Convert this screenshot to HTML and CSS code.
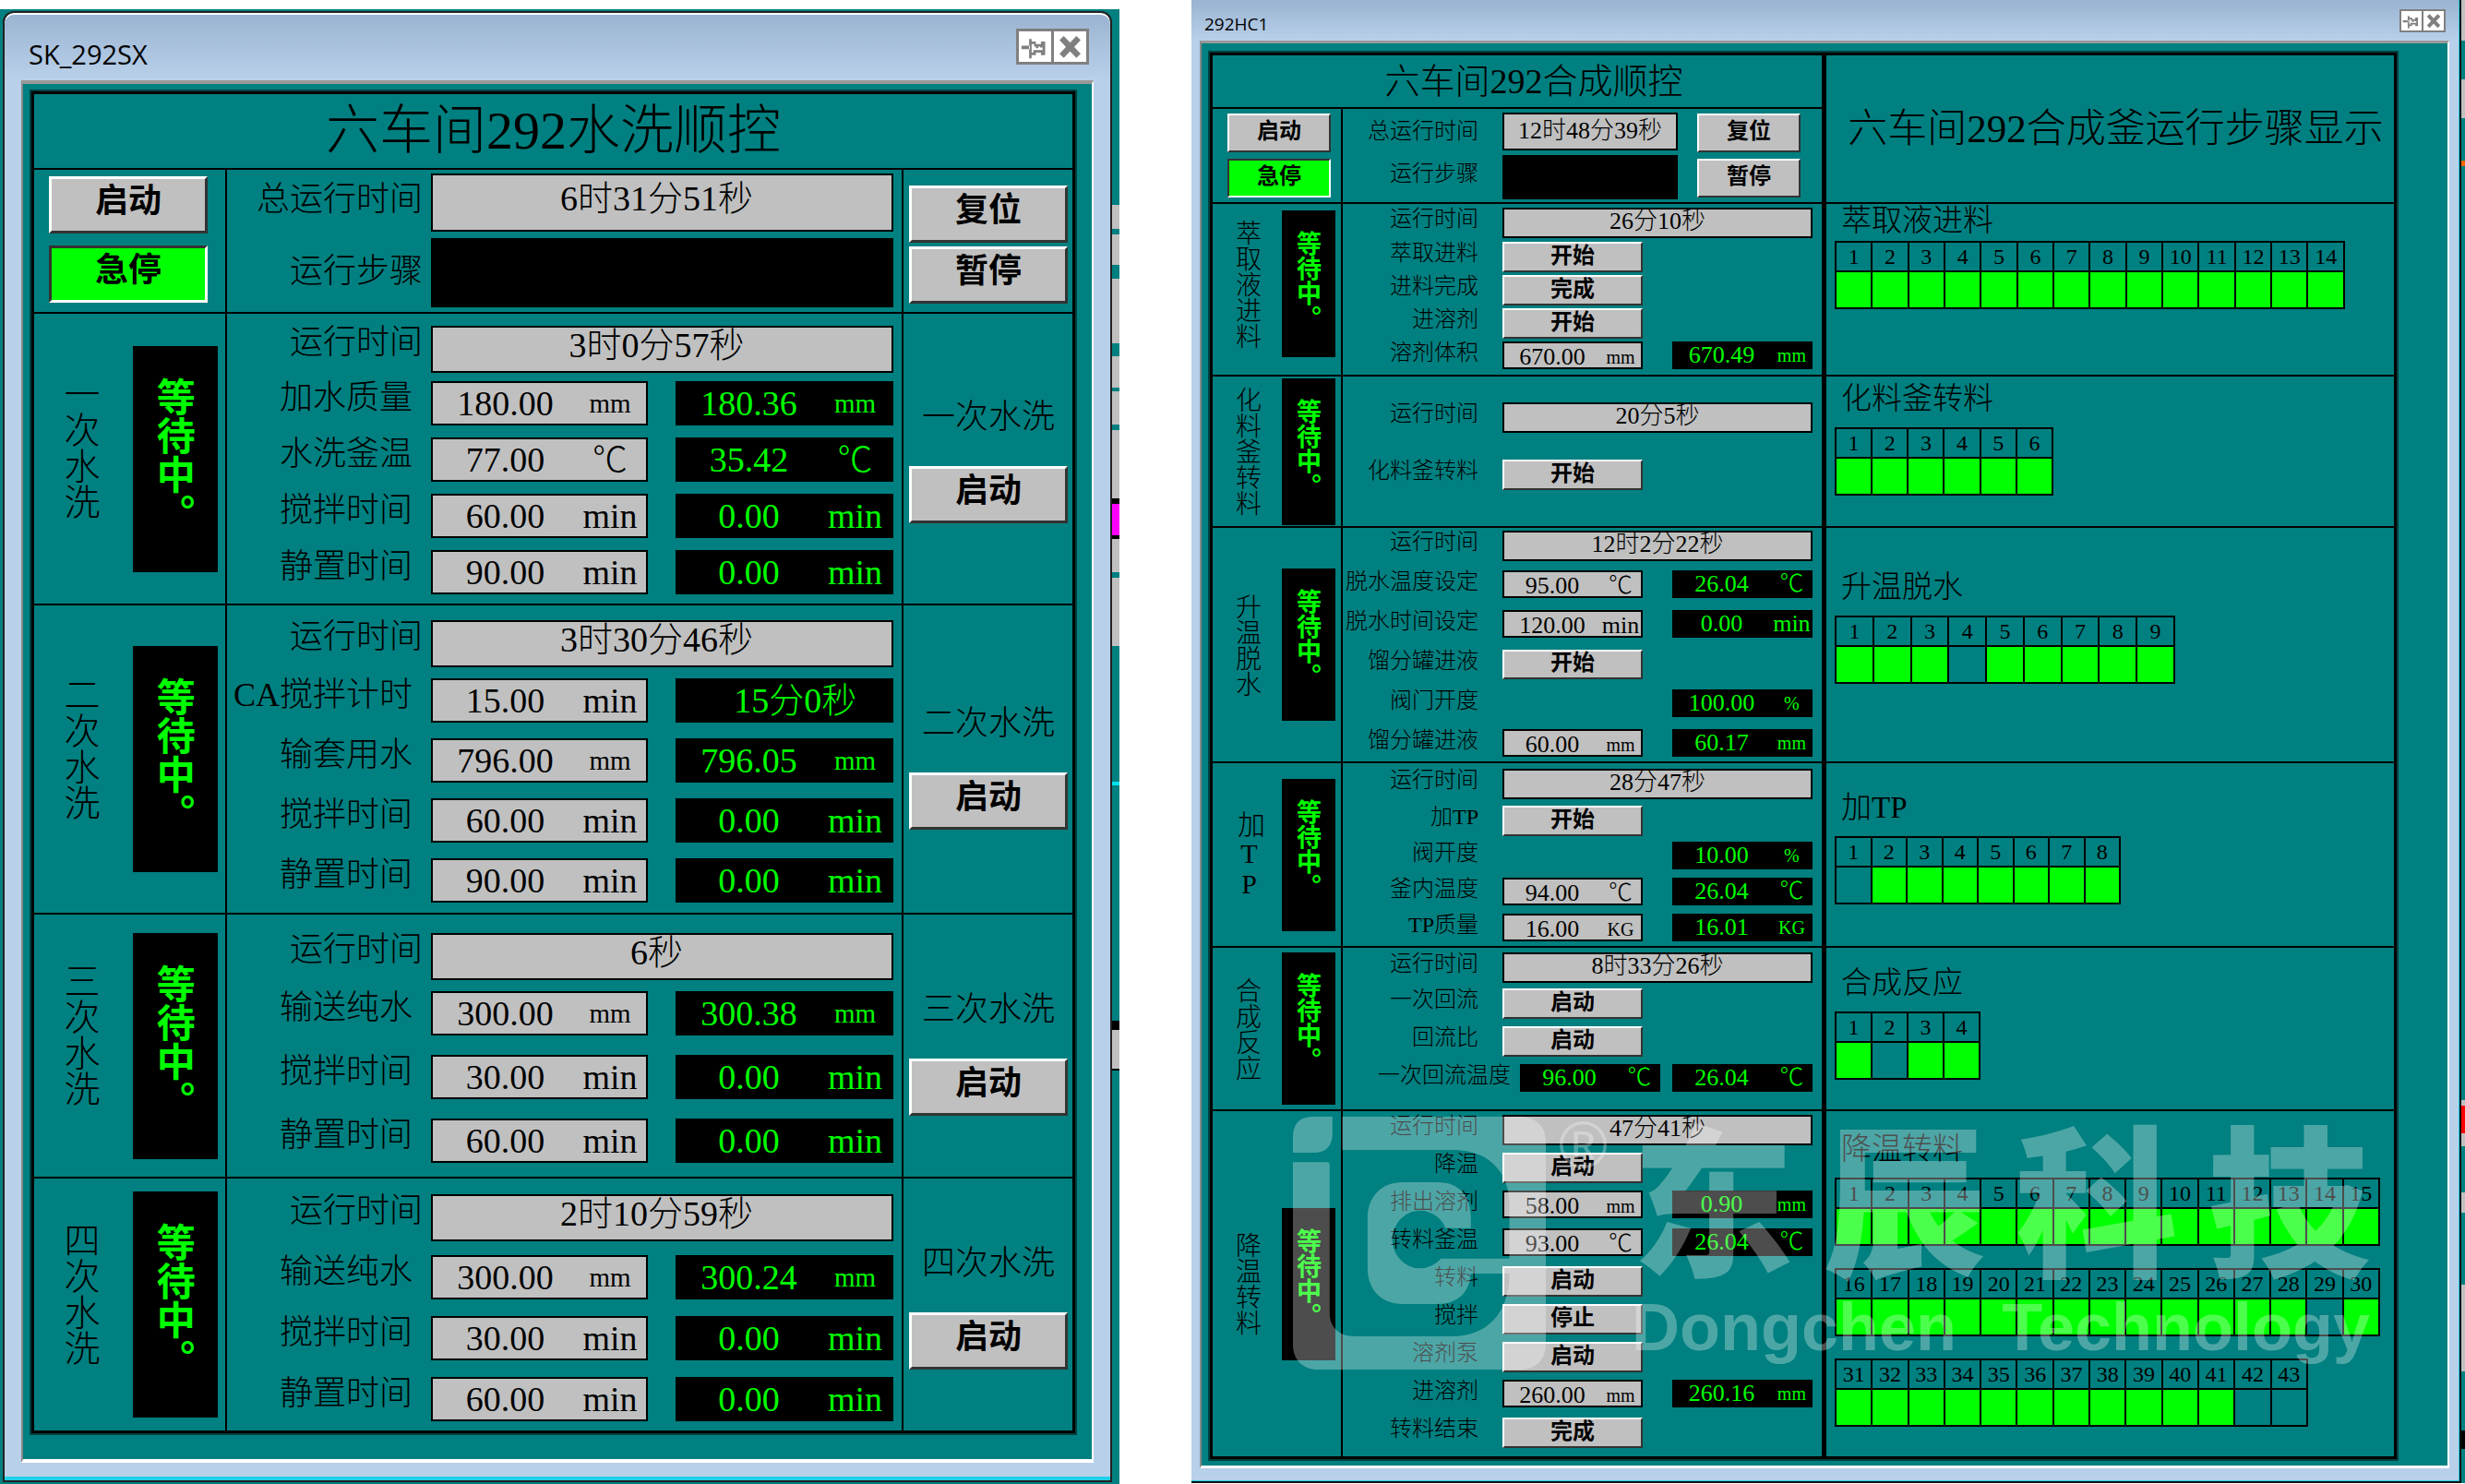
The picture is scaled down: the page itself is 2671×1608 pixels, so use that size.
FILE: index.html
```html
<!DOCTYPE html>
<html lang="zh-CN">
<head>
<meta charset="utf-8">
<title>六车间292顺控</title>
<link rel="stylesheet" href="styles.css">
</head>
<body>
<main class="desktop">

<div class="desk desk-wash">
<section class="window wash" aria-label="SK_292SX">
  <header class="titlebar">
    <span class="caption">SK_292SX</span>
    <div class="tools">
      <button type="button" aria-label="固定"><svg viewBox="0 0 36 36"><path d="M2 17H12V21H2ZM11 9H14V12H19V15H25V12H30V28H25V25H19V28H14V32H11ZM14 15V25H16V22H27V19H24V18H22V20H19V18H17V15Z" fill="#808080" fill-rule="evenodd"/></svg></button>
      <button type="button" aria-label="关闭"><svg viewBox="0 0 36 36"><path d="M8 8L28 29M28 8L8 29" stroke="#808080" stroke-width="7"/></svg></button>
    </div>
  </header>
  <div class="client">
    <div class="frame">
      <h1 class="title">六车间292水洗顺控</h1>

      <div class="section controls">
        <div class="side"><button type="button" class="btn">启动</button><button type="button" class="btn stop">急停</button></div>
        <div class="rows">
          <div class="row total"><span class="label">总运行时间</span><output class="time">6时31分51秒</output></div>
          <div class="row step"><span class="label">运行步骤</span><output class="readout span"></output></div>
        </div>
        <div class="action"><button type="button" class="btn">复位</button><button type="button" class="btn">暂停</button></div>
      </div>

      <div class="section wash-1">
        <div class="side"><h2 class="vertical">一次水洗</h2><output class="wait">等待中。</output></div>
        <div class="rows">
          <div class="row run"><span class="label">运行时间</span><output class="time">3时0分57秒</output></div>
          <div class="row"><label class="label" for="w11">加水质量</label><span class="field"><input id="w11" value="180.00"><span class="unit mm">mm</span></span><output class="readout"><span>180.36</span><span class="unit mm">mm</span></output></div>
          <div class="row"><label class="label" for="w12">水洗釜温</label><span class="field"><input id="w12" value="77.00"><span class="unit">℃</span></span><output class="readout"><span>35.42</span><span class="unit">℃</span></output></div>
          <div class="row"><label class="label" for="w13">搅拌时间</label><span class="field"><input id="w13" value="60.00"><span class="unit">min</span></span><output class="readout"><span>0.00</span><span class="unit">min</span></output></div>
          <div class="row"><label class="label" for="w14">静置时间</label><span class="field"><input id="w14" value="90.00"><span class="unit">min</span></span><output class="readout"><span>0.00</span><span class="unit">min</span></output></div>
        </div>
        <div class="action"><span class="label">一次水洗</span><button type="button" class="btn">启动</button></div>
      </div>

      <div class="section wash-2">
        <div class="side"><h2 class="vertical">二次水洗</h2><output class="wait">等待中。</output></div>
        <div class="rows">
          <div class="row run"><span class="label">运行时间</span><output class="time">3时30分46秒</output></div>
          <div class="row"><label class="label" for="w21">CA搅拌计时</label><span class="field"><input id="w21" value="15.00"><span class="unit">min</span></span><output class="readout timer">15分0秒</output></div>
          <div class="row"><label class="label" for="w22">输套用水</label><span class="field"><input id="w22" value="796.00"><span class="unit mm">mm</span></span><output class="readout"><span>796.05</span><span class="unit mm">mm</span></output></div>
          <div class="row"><label class="label" for="w23">搅拌时间</label><span class="field"><input id="w23" value="60.00"><span class="unit">min</span></span><output class="readout"><span>0.00</span><span class="unit">min</span></output></div>
          <div class="row"><label class="label" for="w24">静置时间</label><span class="field"><input id="w24" value="90.00"><span class="unit">min</span></span><output class="readout"><span>0.00</span><span class="unit">min</span></output></div>
        </div>
        <div class="action"><span class="label">二次水洗</span><button type="button" class="btn">启动</button></div>
      </div>

      <div class="section wash-3">
        <div class="side"><h2 class="vertical">三次水洗</h2><output class="wait">等待中。</output></div>
        <div class="rows">
          <div class="row run"><span class="label">运行时间</span><output class="time">6秒</output></div>
          <div class="row"><label class="label" for="w31">输送纯水</label><span class="field"><input id="w31" value="300.00"><span class="unit mm">mm</span></span><output class="readout"><span>300.38</span><span class="unit mm">mm</span></output></div>
          <div class="row"><label class="label" for="w32">搅拌时间</label><span class="field"><input id="w32" value="30.00"><span class="unit">min</span></span><output class="readout"><span>0.00</span><span class="unit">min</span></output></div>
          <div class="row"><label class="label" for="w33">静置时间</label><span class="field"><input id="w33" value="60.00"><span class="unit">min</span></span><output class="readout"><span>0.00</span><span class="unit">min</span></output></div>
        </div>
        <div class="action"><span class="label">三次水洗</span><button type="button" class="btn">启动</button></div>
      </div>

      <div class="section wash-4">
        <div class="side"><h2 class="vertical">四次水洗</h2><output class="wait">等待中。</output></div>
        <div class="rows">
          <div class="row run"><span class="label">运行时间</span><output class="time">2时10分59秒</output></div>
          <div class="row"><label class="label" for="w41">输送纯水</label><span class="field"><input id="w41" value="300.00"><span class="unit mm">mm</span></span><output class="readout"><span>300.24</span><span class="unit mm">mm</span></output></div>
          <div class="row"><label class="label" for="w42">搅拌时间</label><span class="field"><input id="w42" value="30.00"><span class="unit">min</span></span><output class="readout"><span>0.00</span><span class="unit">min</span></output></div>
          <div class="row"><label class="label" for="w43">静置时间</label><span class="field"><input id="w43" value="60.00"><span class="unit">min</span></span><output class="readout"><span>0.00</span><span class="unit">min</span></output></div>
        </div>
        <div class="action"><span class="label">四次水洗</span><button type="button" class="btn">启动</button></div>
      </div>
    </div>
  </div>
</section>
<div class="strip"></div>
</div>

<div class="desk desk-synth">
<section class="window synth" aria-label="292HC1">
  <header class="titlebar">
    <span class="caption">292HC1</span>
    <div class="tools">
      <button type="button" aria-label="固定"><svg viewBox="0 0 36 36"><path d="M2 17H12V21H2ZM11 9H14V12H19V15H25V12H30V28H25V25H19V28H14V32H11ZM14 15V25H16V22H27V19H24V18H22V20H19V18H17V15Z" fill="#808080" fill-rule="evenodd"/></svg></button>
      <button type="button" aria-label="关闭"><svg viewBox="0 0 36 36"><path d="M8 8L28 29M28 8L8 29" stroke="#808080" stroke-width="7"/></svg></button>
    </div>
  </header>
  <div class="client">
    <div class="frame">
      <div class="head">
        <div class="head-main">
          <h1 class="title">六车间292合成顺控</h1>
          <div class="controls">
            <div class="side"><button type="button" class="btn">启动</button><button type="button" class="btn stop">急停</button></div>
            <div class="rows">
              <div class="row total"><span class="label">总运行时间</span><output class="time">12时48分39秒</output></div>
              <div class="row step"><span class="label">运行步骤</span><output class="readout span"></output></div>
            </div>
            <div class="action"><button type="button" class="btn">复位</button><button type="button" class="btn">暂停</button></div>
          </div>
        </div>
        <h1 class="title steps-title">六车间292合成釜运行步骤显示</h1>
      </div>

      <div class="section feed">
        <div class="side"><h2 class="vertical">萃取液进料</h2><output class="wait">等待中。</output></div>
        <div class="rows">
          <div class="row run"><span class="label">运行时间</span><output class="time">26分10秒</output></div>
          <div class="row"><span class="label">萃取进料</span><button type="button" class="btn">开始</button></div>
          <div class="row"><span class="label">进料完成</span><button type="button" class="btn">完成</button></div>
          <div class="row"><span class="label">进溶剂</span><button type="button" class="btn">开始</button></div>
          <div class="row"><label class="label" for="s11">溶剂体积</label><span class="field"><input id="s11" value="670.00"><span class="unit mm">mm</span></span><output class="readout"><span>670.49</span><span class="unit mm">mm</span></output></div>
        </div>
        <div class="steps"><h3>萃取液进料</h3>
          <table class="n14"><thead><tr><th>1</th><th>2</th><th>3</th><th>4</th><th>5</th><th>6</th><th>7</th><th>8</th><th>9</th><th>10</th><th>11</th><th>12</th><th>13</th><th>14</th></tr></thead><tbody><tr><td class="on"></td><td class="on"></td><td class="on"></td><td class="on"></td><td class="on"></td><td class="on"></td><td class="on"></td><td class="on"></td><td class="on"></td><td class="on"></td><td class="on"></td><td class="on"></td><td class="on"></td><td class="on"></td></tr></tbody></table>
        </div>
      </div>

      <div class="section transfer">
        <div class="side"><h2 class="vertical">化料釜转料</h2><output class="wait">等待中。</output></div>
        <div class="rows">
          <div class="row run"><span class="label">运行时间</span><output class="time">20分5秒</output></div>
          <div class="row"><span class="label">化料釜转料</span><button type="button" class="btn">开始</button></div>
        </div>
        <div class="steps"><h3>化料釜转料</h3>
          <table class="n6"><thead><tr><th>1</th><th>2</th><th>3</th><th>4</th><th>5</th><th>6</th></tr></thead><tbody><tr><td class="on"></td><td class="on"></td><td class="on"></td><td class="on"></td><td class="on"></td><td class="on"></td></tr></tbody></table>
        </div>
      </div>

      <div class="section dewater">
        <div class="side"><h2 class="vertical">升温脱水</h2><output class="wait">等待中。</output></div>
        <div class="rows">
          <div class="row run"><span class="label">运行时间</span><output class="time">12时2分22秒</output></div>
          <div class="row"><label class="label" for="s31">脱水温度设定</label><span class="field"><input id="s31" value="95.00"><span class="unit">℃</span></span><output class="readout"><span>26.04</span><span class="unit">℃</span></output></div>
          <div class="row"><label class="label" for="s32">脱水时间设定</label><span class="field"><input id="s32" value="120.00"><span class="unit">min</span></span><output class="readout"><span>0.00</span><span class="unit">min</span></output></div>
          <div class="row"><span class="label">馏分罐进液</span><button type="button" class="btn">开始</button></div>
          <div class="row"><span class="label">阀门开度</span><output class="readout"><span>100.00</span><span class="unit percent">%</span></output></div>
          <div class="row"><label class="label" for="s33">馏分罐进液</label><span class="field"><input id="s33" value="60.00"><span class="unit mm">mm</span></span><output class="readout"><span>60.17</span><span class="unit mm">mm</span></output></div>
        </div>
        <div class="steps"><h3>升温脱水</h3>
          <table class="n9"><thead><tr><th>1</th><th>2</th><th>3</th><th>4</th><th>5</th><th>6</th><th>7</th><th>8</th><th>9</th></tr></thead><tbody><tr><td class="on"></td><td class="on"></td><td class="on"></td><td></td><td class="on"></td><td class="on"></td><td class="on"></td><td class="on"></td><td class="on"></td></tr></tbody></table>
        </div>
      </div>

      <div class="section add-tp">
        <div class="side"><h2 class="vertical">加TP</h2><output class="wait">等待中。</output></div>
        <div class="rows">
          <div class="row run"><span class="label">运行时间</span><output class="time">28分47秒</output></div>
          <div class="row"><span class="label">加TP</span><button type="button" class="btn">开始</button></div>
          <div class="row"><span class="label">阀开度</span><output class="readout"><span>10.00</span><span class="unit percent">%</span></output></div>
          <div class="row"><label class="label" for="s41">釜内温度</label><span class="field"><input id="s41" value="94.00"><span class="unit">℃</span></span><output class="readout"><span>26.04</span><span class="unit">℃</span></output></div>
          <div class="row"><label class="label" for="s42">TP质量</label><span class="field"><input id="s42" value="16.00"><span class="unit mm">KG</span></span><output class="readout"><span>16.01</span><span class="unit mm">KG</span></output></div>
        </div>
        <div class="steps"><h3>加TP</h3>
          <table class="n8"><thead><tr><th>1</th><th>2</th><th>3</th><th>4</th><th>5</th><th>6</th><th>7</th><th>8</th></tr></thead><tbody><tr><td></td><td class="on"></td><td class="on"></td><td class="on"></td><td class="on"></td><td class="on"></td><td class="on"></td><td class="on"></td></tr></tbody></table>
        </div>
      </div>

      <div class="section react">
        <div class="side"><h2 class="vertical">合成反应</h2><output class="wait">等待中。</output></div>
        <div class="rows">
          <div class="row run"><span class="label">运行时间</span><output class="time">8时33分26秒</output></div>
          <div class="row"><span class="label">一次回流</span><button type="button" class="btn">启动</button></div>
          <div class="row"><span class="label">回流比</span><button type="button" class="btn">启动</button></div>
          <div class="row wide"><span class="label">一次回流温度</span><output class="readout set"><span>96.00</span><span class="unit">℃</span></output><output class="readout"><span>26.04</span><span class="unit">℃</span></output></div>
        </div>
        <div class="steps"><h3>合成反应</h3>
          <table class="n4"><thead><tr><th>1</th><th>2</th><th>3</th><th>4</th></tr></thead><tbody><tr><td class="on"></td><td></td><td class="on"></td><td class="on"></td></tr></tbody></table>
        </div>
      </div>

      <div class="section cool">
        <div class="side"><h2 class="vertical">降温转料</h2><output class="wait">等待中。</output></div>
        <div class="rows">
          <div class="row run"><span class="label">运行时间</span><output class="time">47分41秒</output></div>
          <div class="row"><span class="label">降温</span><button type="button" class="btn">启动</button></div>
          <div class="row"><label class="label" for="s61">排出溶剂</label><span class="field"><input id="s61" value="58.00"><span class="unit mm">mm</span></span><output class="readout"><span>0.90</span><span class="unit mm">mm</span></output></div>
          <div class="row"><label class="label" for="s62">转料釜温</label><span class="field"><input id="s62" value="93.00"><span class="unit">℃</span></span><output class="readout"><span>26.04</span><span class="unit">℃</span></output></div>
          <div class="row"><span class="label">转料</span><button type="button" class="btn">启动</button></div>
          <div class="row"><span class="label">搅拌</span><button type="button" class="btn">停止</button></div>
          <div class="row"><span class="label">溶剂泵</span><button type="button" class="btn">启动</button></div>
          <div class="row"><label class="label" for="s63">进溶剂</label><span class="field"><input id="s63" value="260.00"><span class="unit mm">mm</span></span><output class="readout"><span>260.16</span><span class="unit mm">mm</span></output></div>
          <div class="row"><span class="label">转料结束</span><button type="button" class="btn">完成</button></div>
        </div>
        <div class="steps"><h3>降温转料</h3>
          <table class="n15"><thead><tr><th>1</th><th>2</th><th>3</th><th>4</th><th>5</th><th>6</th><th>7</th><th>8</th><th>9</th><th>10</th><th>11</th><th>12</th><th>13</th><th>14</th><th>15</th></tr></thead><tbody><tr><td class="on"></td><td class="on"></td><td class="on"></td><td class="on"></td><td class="on"></td><td class="on"></td><td class="on"></td><td class="on"></td><td class="on"></td><td class="on"></td><td class="on"></td><td class="on"></td><td class="on"></td><td class="on"></td><td class="on"></td></tr></tbody></table>
          <table class="n15"><thead><tr><th>16</th><th>17</th><th>18</th><th>19</th><th>20</th><th>21</th><th>22</th><th>23</th><th>24</th><th>25</th><th>26</th><th>27</th><th>28</th><th>29</th><th>30</th></tr></thead><tbody><tr><td class="on"></td><td class="on"></td><td class="on"></td><td class="on"></td><td class="on"></td><td class="on"></td><td class="on"></td><td class="on"></td><td class="on"></td><td class="on"></td><td class="on"></td><td class="on"></td><td class="on"></td><td></td><td class="on"></td></tr></tbody></table>
          <table class="n13"><thead><tr><th>31</th><th>32</th><th>33</th><th>34</th><th>35</th><th>36</th><th>37</th><th>38</th><th>39</th><th>40</th><th>41</th><th>42</th><th>43</th></tr></thead><tbody><tr><td class="on"></td><td class="on"></td><td class="on"></td><td class="on"></td><td class="on"></td><td class="on"></td><td class="on"></td><td class="on"></td><td class="on"></td><td class="on"></td><td class="on"></td><td></td><td></td></tr></tbody></table>
        </div>

        <div class="watermark">
          <svg class="mark" viewBox="33 30 820 822" preserveAspectRatio="none"><path fill="#fff" d="M161 30V85C161 125 140 147 105 147H33V95C33 55 55 30 95 30ZM33 178H143Q152 178 152 187V670C152 715 185 744 230 744H550C660 744 735 670 735 540H610C605 600 570 639 500 639H390C320 639 275 595 275 520V360C275 290 320 243 390 243H500C575 243 610 290 610 360V392H528A90 94 0 1 0 513 491H735V320C735 210 670 138 550 138H193V30H770C820 30 853 62 853 110V770C853 820 820 852 770 852H115C65 852 33 820 33 770Z"/></svg>
          <span class="reg">®</span>
          <div class="brand">
            <div class="brand-cn"><span>东</span><span>辰</span><span>科</span><span>技</span></div>
            <div class="brand-en"><span>Dongchen</span><span>Technology</span></div>
          </div>
        </div>
      </div>
    </div>
  </div>
</section>
<div class="strip"></div>
</div>

</main>
</body>
</html>
```
FILE: styles.css
```css
* { box-sizing: border-box; }

body {
  margin: 0;
  background: #fff;
  color: #000;
  font-family: "Liberation Serif", "Noto Sans CJK SC", serif;
  font-weight: 300;
}

h1, h2, h3 { margin: 0; font-weight: 300; }

button, input {
  margin: 0;
  font-family: inherit;
  color: inherit;
}

.desktop {
  display: grid;
  grid-template-columns: 1213fr 1380fr;
  column-gap: 78px;
  align-items: start;
}

.desk { display: grid; background: #008080; }
.desk-wash { grid-template-columns: 1fr 8px; margin-top: 10px; padding: 2px 0 4px 3px; }
.desk-synth { grid-template-columns: 1fr 4px; }

/* slivers of the screen behind the windows */
.desk-wash .strip {
  background: linear-gradient(
    #008080 210px, #c0c0c0 210px 236px, #008080 236px 242px, #c0c0c0 242px 275px, #008080 275px 290px,
    #c0c0c0 290px 360px, #008080 360px 374px, #c0c0c0 374px 408px, #008080 408px 412px, #c0c0c0 412px 448px,
    #008080 448px 454px, #c0c0c0 454px 528px, #000 528px 534px, #f0f 534px 568px, #000 568px 572px,
    #c0c0c0 572px 608px, #008080 608px 614px, #c0c0c0 614px 688px, #008080 688px 835px, #00e0f0 835px 839px,
    #008080 839px 1094px, #000 1094px 1104px, #c0c0c0 1104px 1146px, #000 1146px 1148px, #008080 1148px);
}
.desk-synth .strip {
  background: linear-gradient(
    #c0c0c0 44px, #008080 44px 86px, #c0c0c0 86px 128px, #008080 128px 174px, #f60 174px 180px,
    #008080 180px 1192px, #c0c0c0 1192px 1198px, #f00 1198px 1228px, #c0c0c0 1228px 1242px, #008080 1242px 1292px,
    #c0c0c0 1292px 1314px, #008080 1314px 1392px, #c0c0c0 1392px 1486px, #008080 1486px 1550px, #000 1550px 1570px, #008080 1570px);
}

.window {
  display: flex;
  flex-direction: column;
  background: #b9d0ea;
}
.wash {
  border: 2px solid #222;
  border-radius: 12px 12px 0 0;
  padding: 0 18px 19px;
  box-shadow: inset 0 -4px #1fd0e8, inset 0 2px #fff;
  background: linear-gradient(#99b3d0, #b9d0ea 72px);
}
.synth {
  border: solid #111;
  border-width: 0 2px 2px 0;
  padding: 0 11px 14px 9px;
  box-shadow: inset -1px -1px #1fd0e8;
  background: linear-gradient(#99b3d0, #b9d0ea 44px);
}

.titlebar { display: flex; justify-content: space-between; align-items: center; font-family: "Open Sans", sans-serif; font-weight: 400; }
.wash .titlebar { height: 73px; padding: 0 5px 0 8px; font-size: 29px; }
.wash .caption { padding-top: 16px; }
.synth .titlebar { height: 44px; padding: 0 4px 0 5px; font-size: 19px; }
.synth .caption { padding-top: 8px; }

.tools { display: flex; border: 3px solid #808080; background: #808080; gap: 3px; }
.tools button { display: grid; width: 35px; height: 33px; padding: 0; border: 0; background: #fff; }
.tools svg { width: 100%; height: 100%; }
.synth .tools { border-width: 2px; gap: 2px; }
.synth .tools button { width: 22px; height: 21px; }

.client {
  background: #008080;
  border: solid;
  border-color: #999 #fff #fff #888;
}
.wash .client { border-width: 4px 2px; padding: 8px 18px 28px 9px; }
.synth .client { border-width: 3px 2px; padding: 10px 55px 7px 9px; }

.frame {
  border: 3px solid #000;
  outline: 2px solid #004040;
}

.title { text-align: center; }
.section { position: relative; display: grid; border-top: 2px solid #000; }
.side { display: flex; justify-content: space-between; align-items: center; border-right: 2px solid #000; }
.rows { display: flex; flex-direction: column; gap: var(--gap); padding-top: var(--top); padding-bottom: var(--bottom); }
.rows .run { margin-bottom: var(--lead); }
.row { display: grid; }
.row .label { grid-column: 1; justify-self: end; white-space: nowrap; }
.row .field, .row .btn, .row .set { grid-column: 2; }
.row .readout { grid-column: 4; }
.row .readout.set { grid-column: 2; }
.row .time, .row .span { grid-column: 2 / -1; }

.vertical, .wait {
  writing-mode: vertical-rl;
  text-orientation: upright;
  font-family: "Noto Sans CJK SC", sans-serif;
}
.wait {
  background: #000;
  color: #0f0;
  font-weight: 700;
}

.time { background: #c0c0c0; border: 2px solid #000; text-align: center; }
.field, .readout { display: grid; align-items: center; text-align: center; }
.field { background: #c0c0c0; border: 2px solid #000; }
.field input { width: 100%; padding: 0; border: 0; background: none; text-align: center; font-size: inherit; font-weight: inherit; }
.readout { background: #000; color: #0f0; }

.btn {
  border: solid;
  border-color: #fff #333 #333 #fff;
  background: #c0c0c0;
  font-weight: 700;
}
.btn.stop { background: #0f0; border-color: #333 #fff #fff #333; }

/* washing window */
.wash .title { height: 80px; font-size: 58px; line-height: 80px; }
.wash .section { grid-template-columns: 209fr 730fr 185fr; font-size: 36px; }
.wash .side { padding: 0 8px 0 32px; }
.wash .vertical { font-size: 39px; line-height: 40px; padding-bottom: 24px; }
.wash .wait { height: 245px; width: 92px; padding-top: 34px; font-size: 42px; line-height: 92px; }
.wash .rows { padding-right: 9px; }
.wash .row { grid-template-columns: 221fr 235fr 30fr 236fr; height: 46px; }
.wash .row .label { padding-right: 20px; line-height: 36px; }
.wash .run { height: 51px; }
.wash .run .label, .wash .controls .label { padding-right: 9px; }
.wash .time, .wash .field, .wash .readout { font-size: 38px; }
.wash .time { line-height: 38px; padding-right: 12px; }
.wash .field, .wash .readout { grid-template-columns: 162fr 72fr; line-height: 42px; }
.wash .field { padding-right: 4px; }
.wash .readout { padding-right: 6px; }
.wash .timer { grid-template-columns: 1fr; padding-left: 30px; }
.wash .mm { font-size: 29px; }
.wash .btn { height: 62px; border-width: 3px; padding: 0 0 8px; font-size: 36px; line-height: 44px; }
.wash .action { display: flex; flex-direction: column; justify-content: center; gap: 36px; border-left: 2px solid #000; padding: 8px 5px 0 6px; }
.wash .action .label { text-align: center; line-height: 34px; }
.wash .controls .side { display: flex; flex-direction: column; align-items: stretch; justify-content: flex-start; gap: 13px; padding: 7px 19px 0 16px; }
.wash .controls .action { justify-content: flex-start; gap: 4px; padding-top: 17px; }
.wash .total { height: 63px; }
.wash .step { height: 75px; }
.wash .total .label { padding-top: 10px; }
.wash .step .label { padding-top: 18px; }
.wash .total .time { line-height: 50px; }

.wash .controls { --top: 4px; --gap: 7px; --lead: 0; --bottom: 5px; }
.wash-1 { --top: 13px; --gap: 15px; --lead: -6px; --bottom: 12px; }
.wash-2 { --top: 16px; --gap: 19px; --lead: -7px; --bottom: 13px; }
.wash-3 { --top: 20px; --gap: 23px; --lead: -11px; --bottom: 17px; }
.wash-4 { --top: 17px; --gap: 20px; --lead: -5px; --bottom: 12px; }
.wash .wash-2 .action, .wash .wash-3 .action { padding-top: 20px; }

/* synthesis window */
.synth .title { height: 56px; padding-left: 36px; font-size: 38px; line-height: 56px; }
.head { display: grid; grid-template-columns: 665fr 615fr; }
.head-main { border-right: 5px solid #000; }
.head-main .controls { display: grid; grid-template-columns: 141fr 363fr 156fr; border-top: 2px solid #000; font-size: 24px; }
.synth .steps-title { align-self: center; height: 60px; padding-left: 12px; font-size: 43px; line-height: 60px; }
.synth .section { grid-template-columns: 141fr 524fr 615fr; font-size: 24px; }
.synth .side { padding: 0 6px 0 24px; }
.synth .vertical { font-size: 28px; line-height: 30px; }
.synth .wait { height: 165px; width: 58px; padding-top: 22px; font-size: 27px; line-height: 58px; }
.feed .side { padding-bottom: 12px; }
.synth .feed .wait, .synth .transfer .wait { height: 159px; }
.synth .add-tp .vertical { font-family: inherit; font-size: 30px; }
.synth .row { grid-template-columns: 173fr 152fr 32fr 152fr; height: 33px; }
.synth .row .label { padding-right: 26px; line-height: 24px; }
.synth .section .rows { padding-right: 10px; border-right: 5px solid #000; }
.synth .row.wide { grid-template-columns: 192fr 152fr 13fr 152fr; }
.synth .wide .label { padding-right: 10px; }
.synth .time, .synth .field, .synth .readout { font-size: 26px; }
.synth .time { line-height: 26px; }
.synth .field, .synth .section .readout { grid-template-columns: 104fr 44fr; height: 30px; line-height: 26px; }
.synth .mm, .percent { font-size: 20px; }
.synth .btn { border-width: 2px; padding: 0 0 4px; font-size: 24px; line-height: 24px; }
.synth .controls .side { flex-direction: column; align-items: stretch; justify-content: flex-start; gap: 7px; padding: 5px 11px 0 16px; }
.synth .controls .action { display: flex; flex-direction: column; gap: 7px; padding: 5px 23px 0 21px; }
.synth .controls .btn { height: 42px; }
.synth .controls .row { grid-template-columns: 173fr 190fr; }
.synth .controls .total { height: 41px; }
.synth .controls .step { height: 48px; }
.synth .controls .label { padding-top: 8px; }
.synth .total .time { line-height: 36px; }

.synth .controls { --top: 4px; --gap: 5px; --lead: 0; --bottom: 3px; }
.feed { --top: 4px; --gap: 3px; --lead: 1px; --bottom: 3px; --head: 1px; --under: 5px; }
.transfer { --top: 28px; --gap: 29px; --lead: 0; --bottom: 39px; --head: 7px; --under: 14px; }
.dewater { --top: 3px; --gap: 13px; --lead: -3px; --bottom: 5px; --head: 47px; --under: 14px; }
.add-tp { --top: 6px; --gap: 6px; --lead: 1px; --bottom: 2px; --head: 31px; --under: 14px; }
.react { --top: 5px; --gap: 8px; --lead: -2px; --bottom: 16px; --head: 21px; --under: 14px; }
.cool { --top: 4px; --gap: 8px; --lead: 0; --bottom: 9px; --head: 24px; --under: 14px; }
.synth .dewater .row { height: 30px; }
.synth .dewater .run { height: 33px; }

.steps { padding: var(--head) 0 0 9px; }
.steps h3 { padding-left: 7px; margin-bottom: var(--under); font-size: 33px; line-height: 34px; }
.steps table { table-layout: fixed; border-collapse: collapse; margin-bottom: 24px; }
.steps th, .steps td { padding: 0; border: 2px solid #000; }
.steps th { height: 32px; font-size: 24px; font-weight: 300; line-height: 30px; }
.steps td { height: 40px; }
.steps .on { background: #0f0; }
.n4 { width: 158px; }
.n6 { width: 237px; }
.n8 { width: 310px; }
.n9 { width: 369px; }
.n13 { width: 513px; }
.n14 { width: 553px; }
.n15 { width: 591px; }

/* company mark laid over the last section */
.watermark {
  position: absolute;
  inset: 6px 26px auto 87px;
  display: flex;
  align-items: flex-start;
  color: #fff;
  opacity: 0.3;
  pointer-events: none;
}
.mark { width: 274px; height: 274px; flex: none; }
.reg { margin: 0 26px 0 14px; font-family: "Liberation Sans", sans-serif; font-size: 72px; line-height: 60px; }
.brand { flex: 1; }
.brand-cn, .brand-en { display: flex; justify-content: space-between; }
.brand-cn { font-family: "Noto Sans CJK SC", sans-serif; font-size: 176px; font-weight: 900; line-height: 168px; }
.brand-en { padding-top: 18px; font-family: "Liberation Sans", sans-serif; font-size: 72px; font-weight: 700; line-height: 84px; }
```
